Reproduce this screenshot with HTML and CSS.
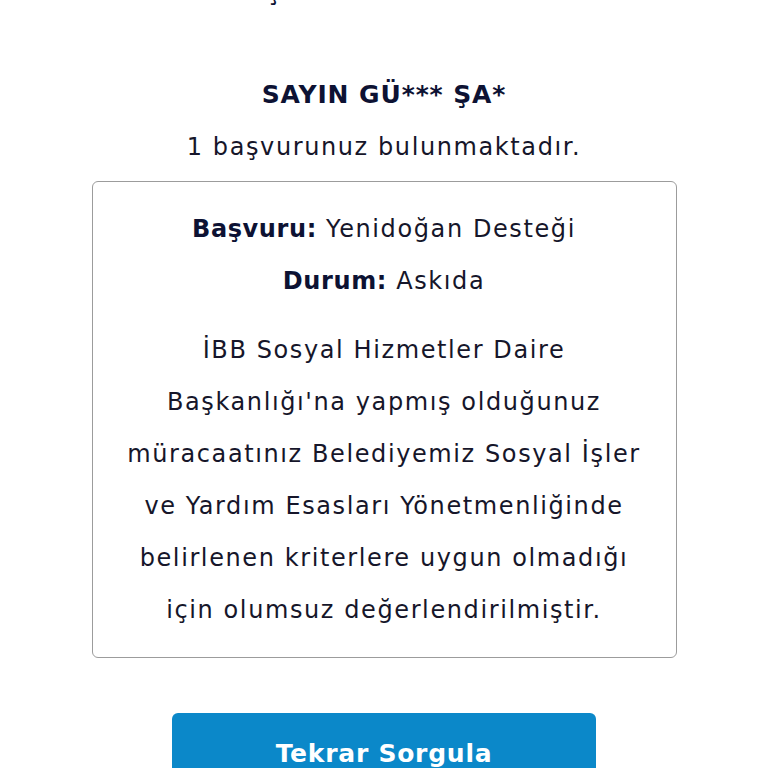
FILE: index.html
```html
<!DOCTYPE html>
<html lang="tr">
<head>
<meta charset="utf-8">
<title>Başvuru Sorgulama</title>
<link rel="stylesheet" href="styles.css">
</head>
<body>
<main class="page">
  <h1 class="page-title">BAŞVURU SORGULAMA</h1>
  <h2 class="greeting">SAYIN GÜ*** ŞA*</h2>
  <p class="count">1 başvurunuz bulunmaktadır.</p>
  <section class="card">
    <p class="row"><strong>Başvuru:</strong> Yenidoğan Desteği</p>
    <p class="row"><strong>Durum:</strong> Askıda</p>
    <p class="desc">İBB Sosyal Hizmetler Daire Başkanlığı'na yapmış olduğunuz müracaatınız Belediyemiz Sosyal İşler ve Yardım Esasları Yönetmenliğinde belirlenen kriterlere uygun olmadığı için olumsuz değerlendirilmiştir.</p>
  </section>
  <button class="btn" type="button">Tekrar Sorgula</button>
</main>
</body>
</html>
```
FILE: styles.css
```css
* { box-sizing: border-box; }
html, body { margin: 0; padding: 0; background: #ffffff; }
body {
  font-family: "DejaVu Sans", "Open Sans", sans-serif;
  color: #16162a;
  overflow: hidden;
  height: 768px;
}
.page {
  display: flex;
  flex-direction: column;
  align-items: center;
  text-align: center;
}
.page-title {
  margin: -24px 0 0;
  font-size: 23px;
  line-height: 32px;
  font-weight: 700;
  letter-spacing: 0.8px;
  color: #0d1233;
}
.greeting {
  margin: 71px 0 0;
  font-size: 25px;
  line-height: 32px;
  font-weight: 700;
  letter-spacing: 0.9px;
  color: #0d1233;
}
.count {
  margin: 20px 0 0;
  font-size: 24px;
  line-height: 32px;
  letter-spacing: 1.6px;
}
.card {
  width: 585px;
  margin-top: 18px;
  border: 1px solid #9c9c9c;
  border-radius: 6px;
  padding: 21px 28px 21px;
  font-size: 24px;
  line-height: 52px;
  letter-spacing: 1.6px;
}
.row {
  margin: 0;
}
.row strong { color: #0d1233; font-weight: 700; letter-spacing: 0.6px; }
.desc {
  margin: 17px 0 0;
}
.btn {
  display: flex;
  justify-content: center;
  align-items: flex-start;
  margin-top: 55px;
  width: 424px;
  height: 90px;
  border: none;
  border-radius: 6px;
  background: #0b88c9;
  color: #ffffff;
  font-family: "DejaVu Sans", "Open Sans", sans-serif;
  font-size: 25px;
  line-height: 32px;
  font-weight: 700;
  letter-spacing: 0.75px;
  padding: 25px 0 0;
}
```
